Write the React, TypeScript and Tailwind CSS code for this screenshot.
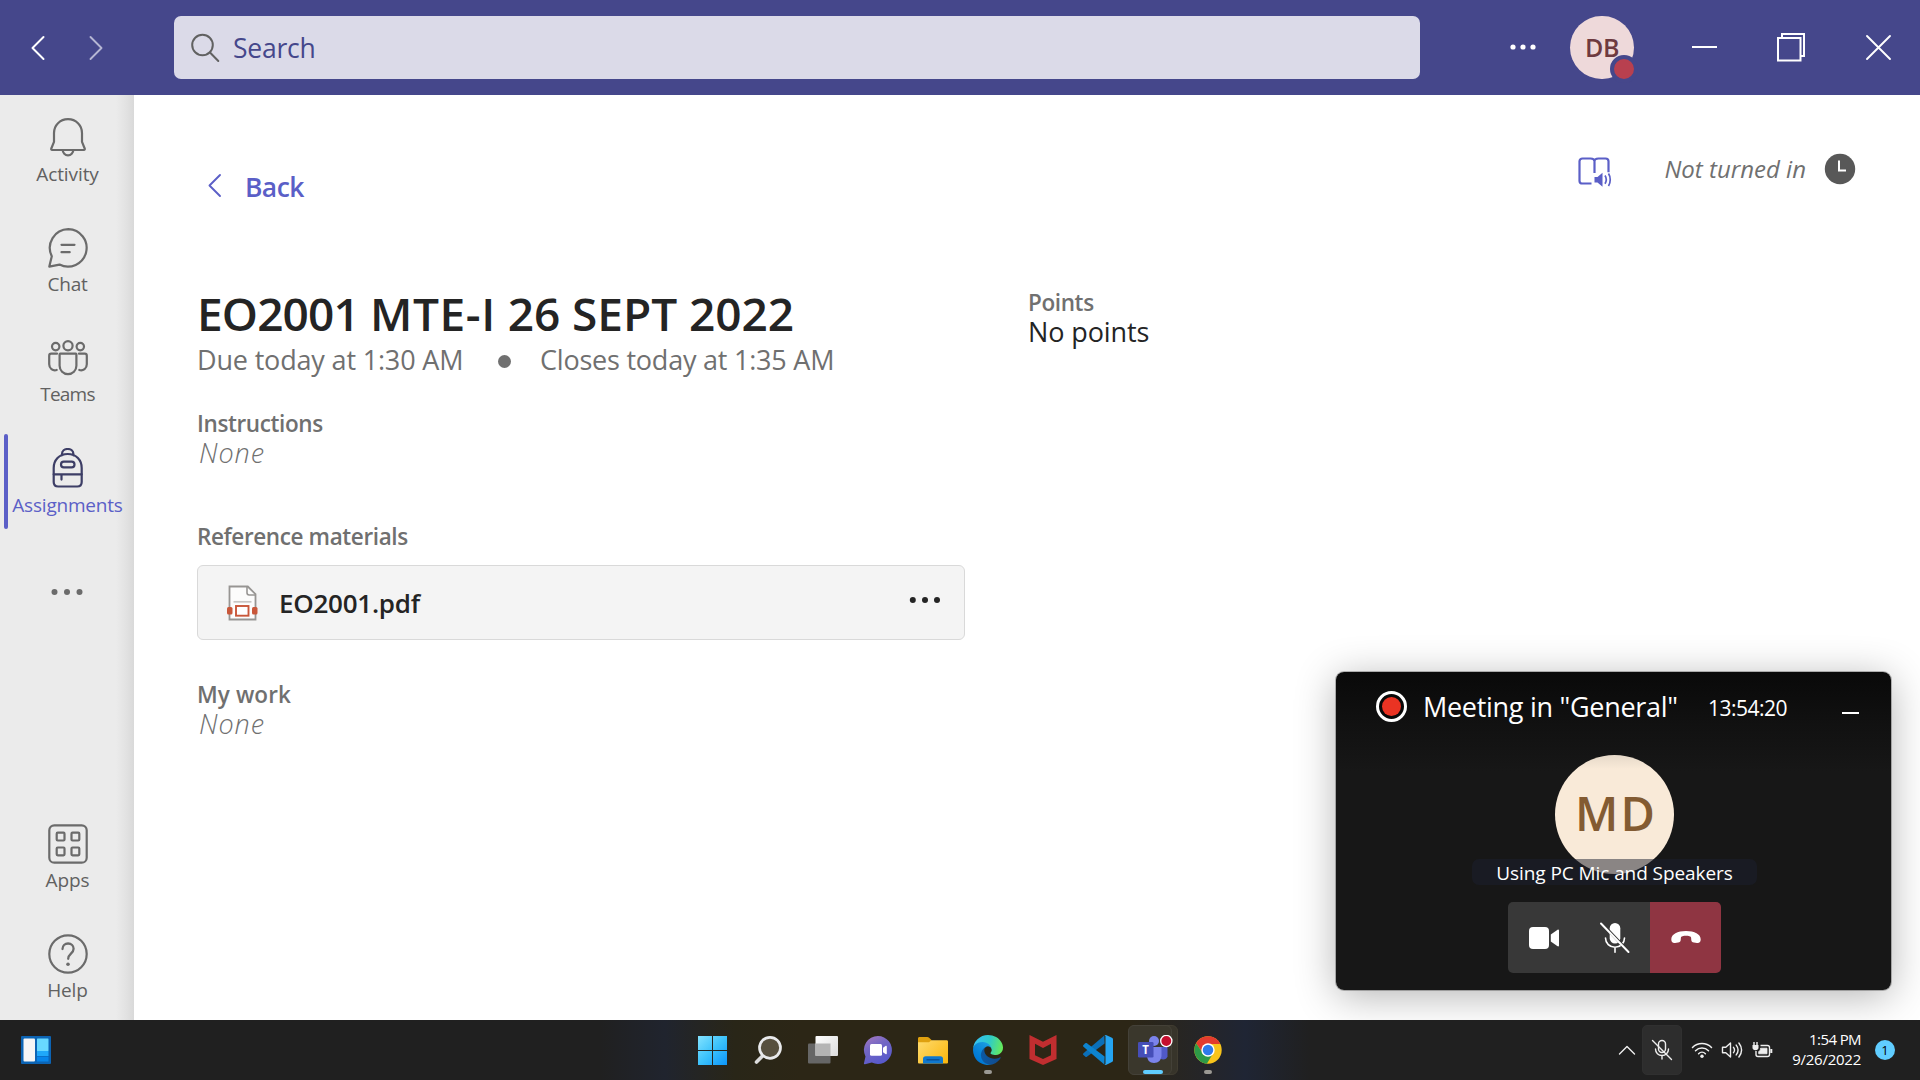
import React from "react";

type P = { children?: React.ReactNode };

/* ---------- Title bar ---------- */

const TitleBar = () => (
  <header className="flex h-[95px] w-full shrink-0 items-center bg-[#45478b]">
    <div className="flex w-[174px] items-center gap-[42px] pl-[29px]">
      <svg width="18" height="28" viewBox="0 0 18 28" fill="none" stroke="#fff" strokeWidth="2" strokeLinecap="round" strokeLinejoin="round">
        <path d="M14.5 3 3.5 14l11 11" />
      </svg>
      <svg width="18" height="28" viewBox="0 0 18 28" fill="none" stroke="#b5b6d3" strokeWidth="1.9" strokeLinecap="round" strokeLinejoin="round">
        <path d="M1.5 3 12.5 14l-11 11" />
      </svg>
    </div>
    <div className="flex h-[63px] w-[1246px] items-center rounded-[7px] bg-[#dbdae8] pl-[16px]">
      <svg width="30" height="32" viewBox="0 0 30 32" fill="none" stroke="#616161" strokeWidth="2" strokeLinecap="round">
        <circle cx="12.5" cy="13" r="10.3" />
        <path d="M20 20.5 28.3 29" />
      </svg>
      <span className="ml-[13px] mt-[1px] text-[26.5px] leading-[36px] tracking-[-0.25px] text-[#45478b]">Search</span>
    </div>
    <svg className="mb-[1px] ml-[89px]" width="28" height="8" viewBox="0 0 28 8" fill="#fff">
      <circle cx="4" cy="4" r="2.6" /><circle cx="14" cy="4" r="2.6" /><circle cx="24" cy="4" r="2.6" />
    </svg>
    <div className="relative ml-[33px] flex h-[63px] w-[64px] items-center justify-center rounded-full bg-[#eed9da]">
      <span className="mb-[2px] text-[25px] font-semibold leading-[36px] tracking-[-0.5px] text-[#6e3a40]">DB</span>
      <span className="absolute left-[40px] top-[39px] h-[28px] w-[28px] rounded-full border-4 border-[#45478b] bg-[#b8404f]" />
    </div>
    <svg className="ml-[58px]" width="25" height="4" viewBox="0 0 25 4"><path d="M0 1h25" stroke="#fff" strokeWidth="2" /></svg>
    <svg className="mb-[1px] ml-[59px]" width="30" height="30" viewBox="0 0 30 30" fill="none" stroke="#fff" strokeWidth="2">
      <rect x="2" y="6" width="22.5" height="22.5" />
      <path d="M6 6V2h22v22h-3.5" />
    </svg>
    <svg className="ml-[59px]" width="27" height="27" viewBox="0 0 27 27" stroke="#fff" strokeWidth="1.9" strokeLinecap="round">
      <path d="M2 2l23 23M25 2 2 25" />
    </svg>
  </header>
);

/* ---------- App rail ---------- */

const RailSvg = ({ children }: P) => (
  <svg width="42" height="42" viewBox="0 0 42 42" fill="none" stroke="currentColor" strokeWidth="2.2" strokeLinecap="round" strokeLinejoin="round">
    {children}
  </svg>
);

const BellIcon = () => (
  <RailSvg>
    <path d="M21 2.2c-8 0-14 6-14 13.800v8.800l-2.700 6.700c-.3.8 0 1.500.8 1.500h31.800c.8 0 1.100-.7.8-1.500L35 24.800V16C35 8.200 29 2.200 21 2.200Z" />
    <path d="M15.700 33a5.300 5.300 0 0 0 10.600 0" />
  </RailSvg>
);
const ChatIcon = () => (
  <RailSvg>
    <path d="M21.300 2.200A18.700 18.700 0 1 1 12.500 37.600L2.300 39.600l2.500-10.400A18.700 18.700 0 0 1 21.300 2.200Z" />
    <path d="M14.500 17.800h13M14.500 25.200h8.200" />
  </RailSvg>
);
const TeamsRailIcon = () => (
  <RailSvg>
    <circle cx="21" cy="8.700" r="4.600" /><circle cx="8.700" cy="9.600" r="3.700" /><circle cx="33.300" cy="9.600" r="3.700" />
    <path d="M13.200 16.700h15.600c.4 0 .6.2.6.6v11.500a8.400 8.400 0 0 1-16.800 0V17.300c0-.4.2-.6.6-.6Z" />
    <path d="M10 16.700H4.200c-1.200 0-2 .8-2 2v8.500c0 4 3.500 7 7.500 5.800M32 16.700h5.800c1.200 0 2 .8 2 2v8.500c0 4-3.500 7-7.500 5.800" />
  </RailSvg>
);
const BackpackIcon = () => (
  <RailSvg>
    <path d="M15 7.300V6c0-3 2.500-5 5.700-5s5.700 2 5.700 5v1.300M6.700 20c0-8 5.500-14 14-14s14 6 14 14v14c0 2.800-1.700 4.500-4.500 4.500h-19c-2.800 0-4.500-1.700-4.500-4.500V20Z" />
    <rect x="14" y="13.700" width="13.500" height="5.600" rx="2.800" />
    <path d="M6.700 26.300h28M14.500 26.300v5.300" />
  </RailSvg>
);
const AppsIcon = () => (
  <RailSvg>
    <rect x="2.300" y="2.300" width="37.400" height="37.400" rx="5" />
    {[[9.700, 9.700], [24.500, 9.700], [9.700, 24.500], [24.500, 24.500]].map(([x, y]) => (
      <rect key={`${x}-${y}`} x={x} y={y} width="7.800" height="7.800" rx="1" />
    ))}
  </RailSvg>
);
const HelpIcon = () => (
  <RailSvg>
    <circle cx="21" cy="21" r="18.700" />
    <path d="M15.500 16c0-3.300 2.400-5.500 5.600-5.500s5.500 2.200 5.500 5.300c0 4.800-5.400 5-5.400 10" strokeWidth="2.300" />
    <circle cx="21" cy="31.300" r="1.800" fill="currentColor" stroke="none" />
  </RailSvg>
);

const RailItem = ({ icon, label, text, active = false }: { icon: React.ReactNode; label: string; text: string; active?: boolean }) => (
  <div className="relative flex h-[110.4px] w-[135px] shrink-0 flex-col items-center pt-[21.6px]">
    {active && <span className="absolute left-[4px] top-[8px] h-[95px] w-[4px] rounded-full bg-[#5b5fc7]" />}
    <span className={active ? "text-[#3d3e66]" : "text-[#6b6b6b]"}>{icon}</span>
    <span className={`mt-[3px] whitespace-nowrap text-[19px] leading-[24px] ${text} ${active ? "text-[#5b5fc7]" : "text-[#616161]"}`}>{label}</span>
  </div>
);

const Rail = () => (
  <nav className="flex w-[134px] shrink-0 flex-col bg-[linear-gradient(to_right,#ebebeb_0,#ebebeb_116px,#e3e3e3_125px,#d9d9d9_134px)] [&_svg]:block">
    <RailItem icon={<BellIcon />} label="Activity" text="tracking-[-0.1px]" />
    <RailItem icon={<ChatIcon />} label="Chat" text="tracking-[-0.2px]" />
    <RailItem icon={<TeamsRailIcon />} label="Teams" text="tracking-[-0.8px]" />
    <RailItem icon={<BackpackIcon />} label="Assignments" text="tracking-[-0.2px]" active />
    <div className="flex h-[111px] items-center justify-center">
      <svg width="34" height="8" viewBox="0 0 34 8" fill="#6b6b6b">
        <circle cx="4.500" cy="4" r="3" /><circle cx="17" cy="4" r="3" /><circle cx="29.500" cy="4" r="3" />
      </svg>
    </div>
    <div className="mt-auto -mb-[2px] flex flex-col">
      <RailItem icon={<AppsIcon />} label="Apps" text="tracking-[-0.1px]" />
      <RailItem icon={<HelpIcon />} label="Help" text="tracking-[-0.1px]" />
    </div>
  </nav>
);

/* ---------- Assignment page ---------- */

const Label = ({ children, text = "tracking-[-0.38px]" }: P & { text?: string }) => (
  <h2 className={`text-[22.5px] font-semibold leading-[29px] text-[#707070] ${text}`}>{children}</h2>
);
const None = () => <p className="pl-[2px] text-[27px] font-light italic leading-[30px] tracking-[0.9px] text-[#707070]">None</p>;

const PdfIcon = () => (
  <svg width="34" height="38" viewBox="0 0 34 38" fill="none">
    <path d="M4.500 2.500h18.300l7.700 7.700v25.300h-26Z" fill="#fcfcfc" stroke="#979593" strokeWidth="1.800" />
    <path d="M22 2.500v6.300c0 1.300.8 2.200 2.200 2.200h6.300" stroke="#979593" strokeWidth="1.600" />
    <path d="M8.500 17.800h18" stroke="#c8c6c4" strokeWidth="1.700" />
    <rect x="9.200" y="20.200" width="16" height="13" fill="#fff" />
    <rect x="11" y="22" width="12.500" height="9.700" stroke="#c9573a" strokeWidth="1.900" />
    <rect x="2" y="23" width="5.500" height="7.500" rx="1.500" fill="#c9573a" />
    <rect x="27" y="23" width="5.500" height="7.500" rx="1.500" fill="#c9573a" />
  </svg>
);

const Assignment = () => (
  <main className="flex grow bg-white pl-[63px]">
    <div className="flex w-[768px] flex-col">
      <div className="mt-[73px] flex h-[36px] items-center">
        <svg className="ml-[10px]" width="16" height="26" viewBox="0 0 16 26" fill="none" stroke="#5b5fc7" strokeWidth="1.900" strokeLinecap="round" strokeLinejoin="round">
          <path d="M13 2 2.500 12.500 13 23" />
        </svg>
        <span className="ml-[22px] mt-[2px] text-[26.5px] font-semibold leading-[36px] tracking-[-0.6px] text-[#5b5fc7]">Back</span>
      </div>
      <h1 className="mt-[81px] whitespace-nowrap text-[46px] font-semibold leading-[56px] tracking-[-0.06px] text-[#242424]">
        <span className="tracking-[-0.87px]">EO2001 </span><span className="tracking-[0.6px]">MTE-I</span> 26 SEPT 2022
      </h1>
      <div className="mt-[1px] flex h-[36px] items-center whitespace-nowrap text-[27px] leading-[36px] text-[#707070]">
        <span className="w-[300.500px] tracking-[-0.17px]">Due today at 1:30 AM</span>
        <span className="mt-[3px] h-[13px] w-[13px] rounded-full bg-[#707070]" />
        <span className="ml-[29.500px] tracking-[-0.22px]">Closes today at 1:35 AM</span>
      </div>
      <div className="mt-[31px]">
        <Label>Instructions</Label>
        <None />
      </div>
      <div className="mt-[54px]"><Label>Reference materials</Label></div>
      <div className="mt-[14px] flex h-[75px] w-[768px] items-center rounded-[6px] border border-[#d9d9d9] bg-[#f4f4f4] pl-[27px] pr-[22px]">
        <PdfIcon />
        <span className="ml-[20px] mt-[1px] text-[26px] font-semibold leading-[36px] tracking-[-0.25px] text-[#242424]">EO2001.pdf</span>
        <svg className="mb-[6px] ml-auto" width="34" height="8" viewBox="0 0 34 8" fill="#242424">
          <circle cx="4.800" cy="4" r="3" /><circle cx="17" cy="4" r="3" /><circle cx="29" cy="4" r="3" />
        </svg>
      </div>
      <div className="mt-[40px]">
        <Label text="tracking-[0.1px]">My work</Label>
        <None />
      </div>
    </div>
    <div className="ml-[63px] mt-[193px] w-[300px]">
      <Label>Points</Label>
      <p className="text-[27px] leading-[30px] tracking-[-0.1px] text-[#242424]">No points</p>
    </div>
    <div className="ml-auto mr-[64px] mt-[56px] flex h-[36px] items-center">
      <svg className="mt-[4px]" width="36" height="34" viewBox="0 0 36 34" fill="none" stroke="#5b5fc7" strokeWidth="2.200" strokeLinejoin="round">
        <path d="M15.500 29.500H6.500c-1.800 0-3-1-3-2.600V7.200c0-1.700 1.200-2.700 3-2.700h8c2.500 0 4 .8 4 2.800 0-2 1.500-2.800 4-2.800h7c1.800 0 3 1 3 2.700v11M18.500 7v12" />
        <path d="M18.500 23h3l5-4.300v14l-5-4.300h-3Z" fill="#5b5fc7" stroke="none" />
        <path d="M29 21.500c1.400 2.300 1.400 6 0 8.300M32.500 19.500c2.300 3.500 2.300 9 0 12.500" strokeWidth="1.700" />
      </svg>
      <span className="ml-[52px] whitespace-nowrap text-[24px] italic leading-[36px] text-[#707070]">Not turned in</span>
      <svg className="ml-[18px]" width="32" height="32" viewBox="0 0 32 32">
        <circle cx="16" cy="16" r="15.200" fill="#585858" />
        <path d="M15 7.500V17.500h7" fill="none" stroke="#fff" strokeWidth="2" />
      </svg>
    </div>
  </main>
);

/* ---------- Meeting mini window ---------- */

const MeetingWindow = () => (
  <section className="absolute left-[1336px] top-[672px] flex h-[318px] w-[555px] flex-col items-center rounded-[8px] bg-[linear-gradient(to_bottom,#090909_0,#111_52px,#171717_100px,#171717_100%)] shadow-[0_0_0_1px_rgba(0,0,0,0.25),0_6px_40px_rgba(0,0,0,0.3)]">
    <div className="flex h-[68px] w-full items-center pl-[40px] text-white">
      <svg width="31" height="31" viewBox="0 0 31 31">
        <circle cx="15.500" cy="15.500" r="14" fill="#090909" stroke="#fff" strokeWidth="3" />
        <circle cx="15.500" cy="15.500" r="9.500" fill="#ea3323" />
      </svg>
      <span className="ml-[16px] mt-[2px] w-[285px] whitespace-nowrap text-[27px] leading-[36px] tracking-[-0.29px]">Meeting in "General"</span>
      <span className="mt-[3px] w-[98px] whitespace-nowrap text-[21px] leading-[30px] tracking-[-0.5px]">13:54:20</span>
      <span className="ml-[36px] mt-[14px] h-[2px] w-[17px] bg-white" />
    </div>
    <div className="relative ml-[2px] mt-[15px] flex h-[119px] w-[119px] shrink-0 items-center justify-center rounded-full bg-[linear-gradient(to_bottom,#e6d9c9_0,#f9ead8_14px)]">
      <span className="mb-[4px] ml-[3px] text-[47px] font-semibold leading-[60px] tracking-[2px] text-[#835b32]">MD</span>
      <div className="absolute left-[-83px] top-[104px] flex h-[26px] w-[285px] items-center justify-center rounded-[7px] bg-[#1b2030]/50">
        <span className="mt-[2px] whitespace-nowrap text-[19px] leading-[26px] tracking-[-0.08px] text-white">Using PC Mic and Speakers</span>
      </div>
    </div>
    <div className="ml-[2px] mt-[28px] flex h-[71px] overflow-hidden rounded-[5px]">
      <div className="flex w-[71px] items-center justify-center bg-[#383838]">
        <svg width="32" height="24" viewBox="0 0 32 24" fill="#fff">
          <rect x="1" y="1" width="20" height="22" rx="4" />
          <path d="M22.800 8.500 29.600 3.700c.7-.4 1.400 0 1.400.8v15c0 .8-.7 1.200-1.400.8L22.800 15.500Z" />
        </svg>
      </div>
      <div className="flex w-[71px] items-center justify-center bg-[#383838]">
        <svg width="32" height="32" viewBox="0 0 32 32" fill="none" stroke="#fff" strokeWidth="1.600" strokeLinecap="round">
          <rect x="10.700" y="1" width="10.600" height="20.500" rx="5.300" fill="#fff" stroke="none" />
          <path d="M6.500 16c0 5.200 4.200 9.300 9.500 9.300s9.500-4.100 9.500-9.300M16 25.300v5" />
          <path d="M4.500 3.200 31 31" stroke="#383838" strokeWidth="3" />
          <path d="M2 1.500 29.500 30" strokeWidth="2" />
        </svg>
      </div>
      <div className="flex w-[71px] items-center justify-center bg-[#8f3542]">
        <svg className="mb-[2px]" width="30" height="14" viewBox="0 0 30 14" fill="#fff">
          <path d="M15 1C6.500 1 .3 4.200.3 9.300c0 2.900 1.300 4 3.800 3.700l3-.4c1.700-.2 2.500-1 2.600-2.600l.2-2.200C10 6.900 10.500 6.500 11.500 6.200c2.200-.5 4.800-.5 7 0 1 .3 1.500.7 1.600 1.600l.2 2.200c.1 1.600.9 2.400 2.600 2.600l3 .4c2.500.3 3.800-.8 3.800-3.700C29.700 4.200 23.500 1 15 1Z" />
        </svg>
      </div>
    </div>
  </section>
);

/* ---------- Taskbar ---------- */

const WidgetsIcon = () => (
  <svg width="30" height="28" viewBox="0 0 30 28">
    <rect width="30" height="28" rx="1" fill="#0c64b4" />
    <rect x="2.500" y="2.500" width="11.500" height="23" rx="1" fill="#f5f5f5" />
    <rect x="16" y="2.500" width="11.500" height="12.500" rx=".5" fill="#68d8ff" />
    <path d="M16 15h11.500v5H16Z" fill="#1fa8fa" /><path d="M16 20.600h11.500v4.900H16Z" fill="#0785ea" />
  </svg>
);
const StartIcon = () => (
  <svg width="30" height="30" viewBox="0 0 30 30">
    <defs><linearGradient id="start" x1="0" y1="0" x2="30" y2="30" gradientUnits="userSpaceOnUse"><stop stopColor="#86e4ff" /><stop offset=".5" stopColor="#3cc2fb" /><stop offset="1" stopColor="#0a94fb" /></linearGradient></defs>
    <path fill="url(#start)" d="M0 1h14v14H0ZM15 1h14v14H15ZM0 16h14v14H0ZM15 16h14v14H15Z" />
  </svg>
);
const TaskSearchIcon = () => (
  <svg width="30" height="30" viewBox="0 0 30 30" fill="none">
    <path d="M10 20.500 3.500 27" stroke="#dcdcdc" strokeWidth="3.600" strokeLinecap="round" />
    <circle cx="17" cy="12.800" r="10.500" fill="#57503f" stroke="#e9eaec" strokeWidth="2.700" />
  </svg>
);
const TaskViewIcon = () => (
  <svg width="32" height="30" viewBox="0 0 32 30">
    <defs><linearGradient id="tv" x1="8" y1="0" x2="31" y2="22" gradientUnits="userSpaceOnUse"><stop stopColor="#fff" /><stop offset="1" stopColor="#dcdcdc" /></linearGradient></defs>
    <rect x="1" y="8.500" width="22.500" height="20" rx="1" fill="#666" />
    <rect x="8.500" y="1" width="22.500" height="20" rx="1" fill="url(#tv)" />
    <path d="M8.500 8.500h15V21h-15Z" fill="#b4b4b4" />
  </svg>
);
const TeamsChatIcon = () => (
  <svg width="30" height="30" viewBox="0 0 30 30">
    <defs><linearGradient id="tc" x1="4" y1="0" x2="18" y2="30" gradientUnits="userSpaceOnUse"><stop stopColor="#a879c0" /><stop offset=".4" stopColor="#7467c4" /><stop offset="1" stopColor="#5558cd" /></linearGradient></defs>
    <path d="M15 1a14 14 0 1 1-6.200 26.600L2 29.200c-.8.200-1.300-.4-1-1.100l1.500-6.600A14 14 0 0 1 15 1Z" fill="url(#tc)" />
    <rect x="7" y="9" width="12" height="11.700" rx="1.500" fill="#fff" />
    <path d="M20 12.700 22.500 11c.8-.5 1.300-.2 1.300.7v6.500c0 .9-.5 1.200-1.300.7L20 17.200Z" fill="#fff" />
  </svg>
);
const FolderIcon = () => (
  <svg width="30" height="28" viewBox="0 0 30 28">
    <defs><linearGradient id="fd" x1="0" y1="4" x2="26" y2="28" gradientUnits="userSpaceOnUse"><stop stopColor="#ffdb6e" /><stop offset="1" stopColor="#fab812" /></linearGradient></defs>
    <path d="M0 2.500C0 1.500.7 1 1.500 1h7.800c.8 0 1.300.2 1.800.7L13.500 4v6H0Z" fill="#dfa00f" />
    <path d="M0 6.300h11l2.500-2h15c1 0 1.500.5 1.500 1.500v20.700c0 .5-.4.900-.9.900H.9c-.5 0-.9-.4-.9-.9Z" fill="url(#fd)" />
    <path d="M5 27.400V23c0-1.700 1-2.700 2.700-2.700h14.600c1.700 0 2.700 1 2.700 2.700v4.400Z" fill="#0f78cf" />
    <path d="M8.500 23.800h13" stroke="#0b4f96" strokeWidth="1.400" />
  </svg>
);
const EdgeIcon = () => (
  <svg width="30" height="30" viewBox="0 0 256 256">
    <defs>
      <linearGradient id="e1" x1="63" y1="177" x2="242" y2="177" gradientUnits="userSpaceOnUse"><stop stopColor="#0c59a4" /><stop offset="1" stopColor="#114a8b" /></linearGradient>
      <linearGradient id="e2" x1="157" y1="100" x2="46" y2="221" gradientUnits="userSpaceOnUse"><stop stopColor="#1b9de2" /><stop offset=".2" stopColor="#1595df" /><stop offset=".7" stopColor="#0680d7" /><stop offset="1" stopColor="#0078d4" /></linearGradient>
      <linearGradient id="e3" x1="20" y1="50" x2="250" y2="110" gradientUnits="userSpaceOnUse"><stop stopColor="#35c1f1" /><stop offset=".5" stopColor="#2fcbc8" /><stop offset="1" stopColor="#66eb5a" /></linearGradient>
    </defs>
    <path fill="url(#e1)" d="M231 190.500c-3.400 1.800-6.900 3.400-10.500 4.700a101.500 101.500 0 0 1-35.900 6.400c-47.300 0-88.500-32.500-88.500-74.300a31.500 31.500 0 0 1 16.400-27.300c-42.800 1.800-53.800 46.400-53.800 72.500 0 74 68.100 81.400 82.800 81.400 7.900 0 19.800-2.300 27-4.600l1.300-.4a128.300 128.300 0 0 0 66.600-52.800 4 4 0 0 0-5.400-5.600Z" />
    <path fill="url(#e2)" d="M105.700 241.400a79.200 79.200 0 0 1-22.700-21.300 80.700 80.700 0 0 1 29.500-120c3.200-1.500 8.500-4.100 15.600-4a32.400 32.400 0 0 1 25.700 13 31.900 31.900 0 0 1 6.300 18.700c0-.2 24.500-79.600-80-79.600-43.900 0-80 41.600-80 78.200a130.200 130.200 0 0 0 12.100 56 128 128 0 0 0 156.400 67 75.500 75.500 0 0 1-62.800-8Z" />
    <path fill="url(#e3)" d="M152.300 148.900c-.8 1-3.300 2.500-3.300 5.700 0 2.600 1.700 5.100 4.700 7.200 14.400 10 41.500 8.700 41.600 8.700a59.600 59.600 0 0 0 30.300-8.300 61.400 61.400 0 0 0 30.400-52.900c.3-22.400-8-37.300-11.300-43.900C223.500 23.900 177.700 0 128 0A128 128 0 0 0 0 126.200c.5-36.500 36.800-66 80-66 3.500 0 23.500.3 42 10.100 16.300 8.600 24.900 18.900 30.800 29.200 6.200 10.700 7.300 24.100 7.300 29.500 0 5.300-2.700 13.300-7.800 19.900Z" />
  </svg>
);
const McAfeeIcon = () => (
  <svg width="28" height="30" viewBox="0 0 28 30">
    <path fillRule="evenodd" fill="#c12e30" d="M.5 0 14 6.700 27.500 0v24L14 30 .5 24ZM6 8.800v11.500l8 3.700 8-3.700V8.800l-8 4.200Z" />
  </svg>
);
const CodeIcon = () => (
  <svg width="30" height="30" viewBox="0 0 100 100">
    <path fill="#0b6fb8" d="M71 2 72 28 13 72.500c-1.500 1-3.500 1-5 0L1.500 67c-2-1.800-2-4.500 0-6.200Z" />
    <path fill="#0d84d0" d="M71 98 72 72 13 27.500c-1.500-1-3.500-1-5 0L1.500 33c-2 1.800-2 4.500 0 6.200Z" />
    <path fill="#25a5f3" d="M71 99c-.8-.3 4.500 1.500 5.500 1l20-9.700c2-1 3.500-3 3.500-5.500V15c0-2.500-1.500-4.500-3.500-5.500l-20-9.400c-2-.8-4.500-.3-6 1.200C72.500.500 75 2 75 4v92c0 2.500-2 3.500-4 3Z" />
  </svg>
);
const TeamsIcon = () => (
  <svg className="ml-[4px]" width="36" height="30" viewBox="0 0 36 30">
    <circle cx="27" cy="7" r="3.500" fill="#5059c9" />
    <path d="M22 12h8.500v9.500a4.500 4.500 0 0 1-8.500 0Z" fill="#5059c9" />
    <circle cx="17" cy="6" r="5" fill="#7b83eb" />
    <path d="M10 12h14.500v8c0 5-3 8-7.500 8s-7-3-7-8Z" fill="#7b83eb" />
    <rect x="1" y="7" width="15.500" height="15.500" rx="1.300" fill="#464eb8" />
    <text x="8.700" y="18.700" fontSize="11.500" fontWeight="700" textAnchor="middle" fill="#fff">T</text>
    <circle cx="29.300" cy="6" r="5.600" fill="#c50f2f" stroke="#fff" strokeWidth="1.300" />
  </svg>
);
const ChromeIcon = () => (
  <svg width="28" height="28" viewBox="0 0 48 48">
    <circle cx="24" cy="24" r="23.500" fill="#f8c41b" />
    <path d="M24 13.500H44.900A23.500 23.500 0 0 0 3.650 12.250L14.900 29.250A10.500 10.500 0 0 1 24 13.500Z" fill="#e33b2e" />
    <path d="M3.650 12.250A23.500 23.500 0 0 0 22 47.400L33.100 29.250A10.500 10.500 0 0 1 14.900 29.250Z" fill="#2d9a47" />
    <circle cx="24" cy="24" r="11.500" fill="#fff" /><circle cx="24" cy="24" r="9" fill="#2f7bea" />
  </svg>
);

const TaskCell = ({ children, indicator }: P & { indicator?: "idle" | "active" }) => (
  <div className="relative flex h-[60px] w-[55.050px] shrink-0 items-center justify-center">
    {indicator === "active" && (
      <>
        <span className="absolute left-[4px] top-[5px] h-[50px] w-[49px] rounded-[6px] border border-[#403c31] bg-[#37342a]" />
        <span className="absolute left-[3px] top-[5px] h-[50px] w-[44px] rounded-[6px] border border-[#444138] bg-[#3a372c]" />
      </>
    )}
    <span className="relative">{children}</span>
    {indicator === "idle" && <span className="absolute left-[23.500px] top-[50px] h-[4px] w-[8px] rounded-full bg-[#9b9993]" />}
    {indicator === "active" && <span className="absolute left-[17.500px] top-[50px] h-[4px] w-[20px] rounded-full bg-[#60cdff]" />}
  </div>
);

const Taskbar = () => (
  <footer className="flex h-[60px] w-full shrink-0 items-center bg-[linear-gradient(to_right,#202020_0,#202020_600px,#20242e_665px,#292618_735px,#2c2616_800px,#2c2616_1130px,#24252a_1210px,#1f2534_1245px,#202020_1310px,#202020_100%)] text-white [&_svg]:block">
    <div className="w-[685px] pl-[21px]"><WidgetsIcon /></div>
    <TaskCell><StartIcon /></TaskCell>
    <TaskCell><TaskSearchIcon /></TaskCell>
    <TaskCell><TaskViewIcon /></TaskCell>
    <TaskCell><TeamsChatIcon /></TaskCell>
    <TaskCell><FolderIcon /></TaskCell>
    <TaskCell indicator="idle"><EdgeIcon /></TaskCell>
    <TaskCell><McAfeeIcon /></TaskCell>
    <TaskCell><CodeIcon /></TaskCell>
    <TaskCell indicator="active"><TeamsIcon /></TaskCell>
    <TaskCell indicator="idle"><ChromeIcon /></TaskCell>
    <div className="ml-auto flex h-[60px] items-center pr-[25px]">
      <svg width="18" height="12" viewBox="0 0 18 12" fill="none" stroke="#eee" strokeWidth="1.400" strokeLinecap="round" strokeLinejoin="round"><path d="M1.500 10 9 2.500l7.500 7.500" /></svg>
      <div className="ml-[6px] flex h-[50px] w-[40px] items-center justify-center rounded-[5px] border border-[#303030] bg-[#2d2d2d]">
        <svg width="22" height="22" viewBox="0 0 22 22" fill="none" stroke="#eee" strokeWidth="1.400" strokeLinecap="round">
          <rect x="7.500" y="1.500" width="7" height="12" rx="3.500" /><path d="M4.500 10c0 3.800 2.900 6.500 6.500 6.500s6.500-2.700 6.500-6.500M11 16.500V20M1.500 1.500l19 19" />
        </svg>
      </div>
      <svg className="ml-[9px]" width="22" height="18" viewBox="0 0 22 18" fill="none" stroke="#eee" strokeWidth="1.500" strokeLinecap="round">
        <path d="M1.500 6.500a13.500 13.500 0 0 1 19 0M4.500 9.700a9.200 9.200 0 0 1 13 0M7.600 12.700a4.900 4.900 0 0 1 6.800 0" /><circle cx="11" cy="15.300" r="1.700" fill="#eee" stroke="none" />
      </svg>
      <svg className="ml-[8px]" width="22" height="18" viewBox="0 0 22 18" fill="none" stroke="#eee" strokeWidth="1.400" strokeLinecap="round" strokeLinejoin="round">
        <path d="M1.500 6.300h3.300L9.500 2v14L4.800 11.700H1.500ZM12.500 6.300c1.200 1.600 1.200 3.800 0 5.400M15.200 4.100c2.300 3 2.300 6.800 0 9.800M17.900 2c3.300 4.300 3.300 9.700 0 14" />
      </svg>
      <svg className="ml-[8px]" width="22" height="18" viewBox="0 0 22 18" fill="none" stroke="#eee" strokeWidth="1.400" strokeLinejoin="round">
        <path d="M9.500 4.500H16.500c1.200 0 2 .8 2 2v7c0 1.200-.8 2-2 2H7c-1.200 0-2-.8-2-2V10" />
        <path d="M9.500 7.200h6.500v5.600H7.700V10.500c1.200-.5 1.800-1.500 1.800-3.300Z" fill="#eee" strokeWidth=".8" /><path d="M20.300 8v4" strokeWidth="2" /><path d="M3 1v3M6 1v3" />
        <path d="M1.500 4h6v2.500c0 1.700-1.200 2.700-3 2.700s-3-1-3-2.700Z" fill="#eee" stroke="none" />
      </svg>
      <div className="mb-[2px] w-[88px] whitespace-nowrap text-right text-[15px] leading-[20px] tracking-[-0.250px]">
        <div className="tracking-[-0.600px]">1:54 PM</div>
        <div>9/26/2022</div>
      </div>
      <span className="ml-[14px] flex h-[20px] w-[20px] items-center justify-center rounded-full bg-[#60cdff] text-[13px] leading-[20px] text-black">1</span>
    </div>
  </footer>
);

export default function App() {
  return (
    <div className="relative flex h-[1080px] w-[1920px] flex-col overflow-hidden bg-white font-['Open_Sans','Noto_Sans',sans-serif]">
      <TitleBar />
      <div className="flex h-[925px] w-full shrink-0">
        <Rail />
        <Assignment />
      </div>
      <MeetingWindow />
      <div className="relative"><Taskbar /></div>
    </div>
  );
}
